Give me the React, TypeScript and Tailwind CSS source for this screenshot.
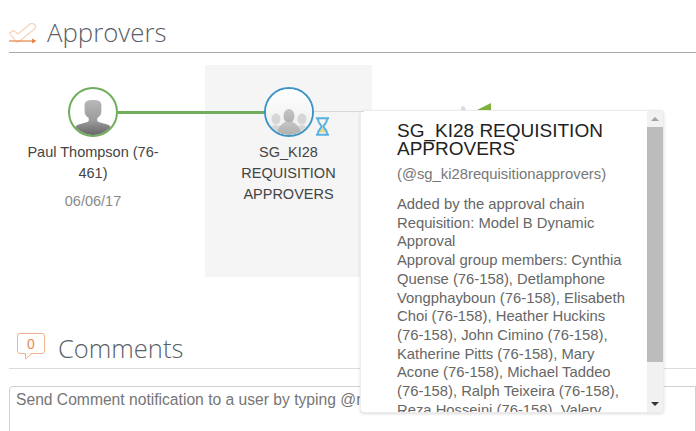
const sans = "font-['Liberation_Sans',Arial,sans-serif]";
const open = "font-['Open_Sans','Noto_Sans',sans-serif]";

function Person() {
  return (
    <svg viewBox="0 0 46 46" className="h-[46px] w-[46px]">
      <defs>
        <linearGradient id="pg" x1="0" y1="0" x2="0" y2="1">
          <stop offset="0" stopColor="#b8b8b8" />
          <stop offset="0.6" stopColor="#9a9a9a" />
          <stop offset="1" stopColor="#666666" />
        </linearGradient>
      </defs>
      <path
        d="M23 11c-6 0-8.500 1.500-8.500 6 0 2 .2 4 .2 6 0 2 1 4 4 6v3c-2 2-9 2.500-12 4.500C5 38 4 40 4 46h38c0-6-1-8-2.700-9.500-3-2-10-2.500-12-4.500v-3c3-2 4-4 4-6 0-2 .2-4 .2-6 0-4.500-2.500-6-8.500-6z"
        fill="url(#pg)"
      />
    </svg>
  );
}

function Group() {
  return (
    <svg viewBox="0 0 46 46" className="h-[46px] w-[46px]">
      <defs>
        <linearGradient id="gb" x1="0" y1="0" x2="0" y2="1">
          <stop offset="0" stopColor="#ffffff" />
          <stop offset="1" stopColor="#ececec" />
        </linearGradient>
        <linearGradient id="gg" x1="0" y1="0" x2="0" y2="1">
          <stop offset="0" stopColor="#c4c4c4" />
          <stop offset="1" stopColor="#b0b0b0" />
        </linearGradient>
      </defs>
      <rect width="46" height="46" fill="url(#gb)" />
      <g fill="#d6d6d6">
        <ellipse cx="10" cy="30" rx="4.500" ry="5.500" />
        <path d="M1 46c0-6 3-9 9-10 6 1 9 4 9 10z" />
        <ellipse cx="36" cy="30" rx="4.500" ry="5.500" />
        <path d="M27 46c0-6 3-9 9-10 6 1 9 4 9 10z" />
      </g>
      <g fill="url(#gg)">
        <ellipse cx="23" cy="27" rx="5.500" ry="7" />
        <path d="M11 46c0-6 3-10 8-13h8c5 3 8 7 8 13z" />
      </g>
    </svg>
  );
}

function Hourglass() {
  return (
    <svg viewBox="0 0 15 19" className="h-[19px] w-[15px]">
      <path d="M3 3h9c0 4-3 4.500-3 6.500S12 12 12 16H3c0-4 3-4.500 3-6.500S3 7 3 3z" fill="#f8f8ee" />
      <path d="M3.600 15.500c.6-2.500 2.900-3.500 3.900-5 1 1.500 3.300 2.500 3.900 5z" fill="#e6d88c" />
      <path d="M1 1.300h13M1 17.700h13M3 2c0 5 3.500 5.500 3.500 7.500S3 12 3 17M12 2c0 5-3.500 5.500-3.500 7.500S12 12 12 17" fill="none" stroke="#58b0e2" strokeWidth="2" />
    </svg>
  );
}

export default function App() {
  return (
    <div className={`relative h-[431px] w-[696px] overflow-hidden bg-white ${sans}`}>
      <section className="pl-[9px] pt-[15px]">
        <div className="flex h-[38px] items-center border-b border-[#a8a8a8]">
          <svg viewBox="0 0 28 22" className="h-[22px] w-[28px]" fill="none" strokeWidth="1.200">
            <path d="M0.500 10L4.500 7.500 9 11 21 1c1.500-1 3-.8 4.500.5s1.700 2.800.5 4L10 18.500c-1 .7-2 .7-3 0z" stroke="#f7d2b8" />
            <path d="M0 18h24" stroke="#e58447" />
            <path d="M23 15.500l4.500 2.500-4.500 2.500z" fill="#e58447" stroke="none" />
          </svg>
          <h2 className={`mb-[2px] ml-[10px] text-[25.800px] font-light leading-none text-[#5a5f66] ${open}`}>Approvers</h2>
        </div>
      </section>

      <section className="flex h-[224px] pl-[9px] pt-[12px]">
        <div className="relative z-10 flex w-[168px] flex-col items-center pt-[22px]">
          <div className="flex h-[50px] w-[50px] items-center justify-center overflow-hidden rounded-full border-[2px] border-[#6fae5c] bg-white">
            <Person />
          </div>
          <div className="absolute left-[109px] top-[46px] h-[3px] w-[148px] bg-[#6fae5c]" />
          <p className="mt-[5px] w-[150px] text-center text-[14.500px] leading-[21px] text-[#444444]">Paul Thompson (76-461)</p>
          <p className="mt-[8px] text-[14.500px] leading-[19px] text-[#8a8a8a]">06/06/17</p>
        </div>
        <div className="ml-[28px] flex h-[212px] w-[167px] flex-col items-center bg-[#f5f5f6] pt-[22px]">
          <div className="relative z-10 h-[50px] w-[50px]">
            <div className="flex h-[50px] w-[50px] items-center justify-center overflow-hidden rounded-full border-[2px] border-[#3d94c6] bg-white">
              <Group />
            </div>
            <div className="absolute left-[51px] top-[30px]">
              <Hourglass />
            </div>
            <div className="absolute left-[50px] top-[24px] h-px w-[50px] bg-[#d8d8d8]" />
          </div>
          <p className="mt-[5px] w-[110px] text-center text-[14.500px] leading-[21px] text-[#444444]">SG_KI28 REQUISITION APPROVERS</p>
        </div>
        <div className="ml-[86px] mt-[38px] h-0 w-[40px]">
          <svg viewBox="0 0 34 7" className="h-[7px] w-[34px]">
            <path d="M3 7c-.5-2 .5-4 2-4s2.500 2 2.500 4z" fill="#dddddd" />
            <path d="M19 7L33 0v7z" fill="#7fb23c" />
          </svg>
        </div>
      </section>

      <section className="pl-[9px] pt-[52px]">
        <div className="flex h-[40px] items-center border-b border-[#dcdcdc]">
          <div className="relative mb-[4px] ml-[8px] h-[27px] w-[29px]">
            <div className="flex h-[21px] w-[28px] items-center justify-center rounded-[3px] border border-[#efb48d] text-[14px] leading-none text-[#e58a4f]">0</div>
            <svg viewBox="0 0 10 7" className="absolute left-[8px] top-[20px] h-[7px] w-[10px]">
              <path d="M0.500 0v6L7 0.500" fill="#ffffff" stroke="#efb48d" />
            </svg>
          </div>
          <h2 className={`ml-[12px] text-[25.500px] font-light leading-none text-[#5a5f66] ${open}`}>Comments</h2>
        </div>
        <div className="mt-[17px] h-[80px] whitespace-nowrap rounded-tl-[4px] border border-[#cfcfcf] px-[6px] py-[3px] text-[15.650px] leading-[20px] text-[#767676]">
          Send Comment notification to a user by typing @name
        </div>
      </section>

      <aside className="absolute left-[360px] top-[110px] flex h-[303px] w-[304px] overflow-hidden rounded-[4px] border border-[#ececec] bg-white shadow-[0_1px_3px_rgba(0,0,0,0.14)]">
        <div className="w-[286px] shrink-0 overflow-hidden pl-[36px] pr-[14px] pt-[11px]">
          <h3 className="text-[19px] leading-[18px] text-[#222222]">SG_KI28 REQUISITION APPROVERS</h3>
          <p className="mt-[6px] text-[14.800px] leading-[20px] text-[#777777]">(@sg_ki28requisitionapprovers)</p>
          <p className="mt-[11px] text-[14.800px] leading-[18.700px] text-[#666666]">
            Added by the approval chain
            <br />
            Requisition: Model B Dynamic Approval
            <br />
            Approval group members: Cynthia Quense (76-158), Detlamphone Vongphayboun (76-158), Elisabeth Choi (76-158), Heather Huckins (76-158), John Cimino (76-158), Katherine Pitts (76-158), Mary Acone (76-158), Michael Taddeo (76-158), Ralph Teixeira (76-158), Reza Hosseini (76-158), Valery
          </p>
        </div>
        <div className="flex w-[16px] flex-col items-center bg-[#f1f1f1]">
          <div className="flex h-[16px] w-full items-center justify-center">
            <div className="h-0 w-0 border-x-[4px] border-b-[4px] border-x-transparent border-b-[#a3a3a3]" />
          </div>
          <div className="h-[235px] w-full bg-[#bcbcbc]" />
          <div className="flex-1" />
          <div className="flex h-[16px] w-full items-center justify-center">
            <div className="h-0 w-0 border-x-[4px] border-t-[4px] border-x-transparent border-t-[#333333]" />
          </div>
        </div>
      </aside>
    </div>
  );
}
